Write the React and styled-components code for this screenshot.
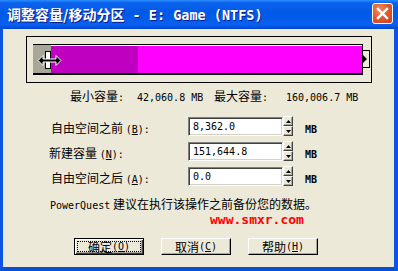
import React from 'react';
import styled, { createGlobalStyle } from 'styled-components';

const Global = createGlobalStyle`
  html, body { margin: 0; padding: 0; background: #fff; }
  body {
    font-family: "Noto Sans CJK SC", sans-serif;
    font-size: 12px;
    color: #000;
  }
  * { box-sizing: border-box; }
`;

const Window = styled.div`
  width: 398px;
  height: 271px;
  display: flex;
  flex-direction: column;
  overflow: hidden;
`;

const TitleBar = styled.div`
  height: 29px;
  flex: none;
  display: flex;
  align-items: center;
  padding: 0 5px 0 7px;
  background: linear-gradient(
    to bottom,
    #2a8cff 0%,
    #0a62ec 10%,
    #0058e6 45%,
    #0a60f0 85%,
    #0050dc 95%,
    #0040c8 100%
  );
`;

const TitleText = styled.div`
  flex: 1;
  color: #fff;
  font-weight: bold;
  font-size: 14px;
  line-height: 16px;
  margin-top: -1px;
  text-shadow: 1px 1px 0 #0a1a8a;
  white-space: nowrap;
`;

const TitleMono = styled.span`
  font-family: "DejaVu Sans Mono", monospace;
  font-size: 13.5px;
  font-weight: bold;
`;

const CloseButton = styled.div`
  width: 21px;
  height: 21px;
  margin-top: -3px;
  border: 1px solid #fff;
  border-radius: 3px;
  background: radial-gradient(circle at 35% 30%, #f08a5c 0%, #e0582c 50%, #c8401a 100%);
  display: flex;
  align-items: center;
  justify-content: center;
`;

const Body = styled.div`
  flex: 1;
  display: flex;
  flex-direction: column;
  background: #ece9d8;
  border-left: 3px solid #0b55e0;
  border-right: 4px solid #0b55e0;
  border-bottom: 4px solid #0a4ed4;
  padding-top: 7px;
`;

const SliderBox = styled.div`
  position: relative;
  margin-left: 23px;
  width: 346px;
  height: 47px;
  border: 1px solid #000;
  padding: 7px 0 0 6px;
  display: flex;
  align-items: flex-start;
`;

const Bar = styled.div`
  width: 330px;
  height: 31px;
  display: flex;
  border-top: 1px solid #000;
  border-bottom: 2px solid #000;
  border-right: 1px solid #000;
`;

const Segment = styled.div`
  flex: ${p => (p.$grow ? '1' : 'none')};
  width: ${p => (p.$grow ? 'auto' : `${p.$w}px`)};
  background: ${p => p.$color};
  box-shadow: ${p => (p.$shine ? 'inset 0 1px 0 #fff' : 'none')};
  display: flex;
  align-items: center;
  justify-content: flex-end;
`;

const Handle = styled.div`
  width: 6px;
  height: 18px;
  margin-top: 1px;
  border: 1px solid #000;
  background: #fff;
`;

const EndCap = styled.div`
  margin-top: 6px;
  width: 7px;
  height: 18px;
  border: 1px solid #000;
  border-left: none;
  display: flex;
  align-items: center;
`;

const Cursor = styled.svg`
  position: absolute;
  left: 10px;
  top: 18px;
`;

const StatsRow = styled.div`
  margin-top: 5px;
  height: 16px;
  line-height: 16px;
  padding-left: 67px;
  display: flex;
  white-space: nowrap;
`;

const StatCell = styled.div`
  width: ${p => p.$w}px;
  flex: none;
`;

const Mono = styled.span`
  font-family: "DejaVu Sans Mono", monospace;
  font-size: 10px;
`;

const Form = styled.div`
  margin-top: 13px;
  display: flex;
  flex-direction: column;
  gap: 6px;
`;

const FieldRow = styled.div`
  height: 19px;
  display: flex;
  align-items: center;
  padding-left: ${p => p.$indent}px;
`;

const FieldLabel = styled.div`
  width: ${p => 137 + (48 - p.$indent)}px;
  padding-top: 5px;
  line-height: 16px;
  white-space: nowrap;
`;

const Input = styled.div`
  width: 95px;
  height: 19px;
  background: #fff;
  border-top: 1px solid #808080;
  border-left: 1px solid #808080;
  border-bottom: 1px solid #fff;
  border-right: 1px solid #fff;
  box-shadow: inset 1px 1px 0 #404040, inset -1px -1px 0 #d4d0c8;
  padding: 0 4px;
  display: flex;
  align-items: center;
  font-family: "DejaVu Sans Mono", monospace;
  font-size: 10px;
`;

const Spinner = styled.div`
  width: 10px;
  height: 20px;
  display: flex;
  flex-direction: column;
  margin-top: -1px;
`;

const SpinButton = styled.div`
  flex: 1;
  background: #ece9d8;
  border-top: 1px solid #fff;
  border-left: 1px solid #fff;
  border-bottom: 1px solid #404040;
  border-right: 1px solid #404040;
  box-shadow: inset -1px -1px 0 #aca899;
  display: flex;
  align-items: center;
  justify-content: center;
`;

const Unit = styled.div`
  margin-left: 12px;
  padding-top: 5px;
  font-family: "DejaVu Sans Mono", monospace;
  font-size: 10px;
  font-weight: bold;
`;

const Notice = styled.div`
  margin-top: 11px;
  padding-left: 47px;
  line-height: 14px;
  white-space: nowrap;
`;

const Site = styled.div`
  margin-top: 0px;
  padding-left: 207px;
  height: 14px;
  line-height: 14px;
  color: #ff0000;
  font-family: "DejaVu Sans Mono", monospace;
  font-size: 13px;
  font-weight: bold;
`;

const ButtonRow = styled.div`
  margin-top: 11px;
  padding-left: 71px;
  display: flex;
  gap: 17px;
`;

const Button = styled.div`
  width: 70px;
  height: 17px;
  background: #ece9d8;
  border-top: 1px solid ${p => (p.$default ? '#000' : '#fff')};
  border-left: 1px solid ${p => (p.$default ? '#000' : '#fff')};
  border-bottom: 1px solid #000;
  border-right: 1px solid #000;
  box-shadow: ${p =>
    p.$default
      ? 'inset 1px 1px 0 #fff, inset -1px -1px 0 #404040, inset -2px -2px 0 #aca899'
      : 'inset -1px -1px 0 #aca899'};
  display: flex;
  align-items: center;
  justify-content: center;
  padding: 2px;
`;

const Focus = styled.div`
  width: 100%;
  height: 100%;
  display: flex;
  align-items: center;
  justify-content: center;
  outline: ${p => (p.$on ? '1px dotted #000' : 'none')};
  outline-offset: -1px;
  line-height: 12px;
  white-space: nowrap;
`;

const Key = ({ k }) => (
  <Mono>
    (<u>{k}</u>)
  </Mono>
);

const Up = () => (
  <svg width="5" height="3" viewBox="0 0 5 3">
    <polygon points="2.5,0 5,3 0,3" fill="#000" />
  </svg>
);
const Down = () => (
  <svg width="5" height="3" viewBox="0 0 5 3">
    <polygon points="0,0 5,0 2.5,3" fill="#000" />
  </svg>
);

const Field = ({ indent = 48, label, k, value }) => (
  <FieldRow $indent={indent}>
    <FieldLabel $indent={indent}>
      {label} <Key k={k} />
      <Mono>:</Mono>
    </FieldLabel>
    <Input>{value}</Input>
    <Spinner>
      <SpinButton>
        <Up />
      </SpinButton>
      <SpinButton>
        <Down />
      </SpinButton>
    </Spinner>
    <Unit>MB</Unit>
  </FieldRow>
);

export default function App() {
  return (
    <>
      <Global />
      <Window>
        <TitleBar>
          <TitleText>
            调整容量/移动分区<TitleMono> - E: Game (NTFS)</TitleMono>
          </TitleText>
          <CloseButton>
            <svg width="13" height="13" viewBox="0 0 13 13">
              <path d="M2 2 L11 11 M11 2 L2 11" stroke="#fff" strokeWidth="2.4" strokeLinecap="square" />
            </svg>
          </CloseButton>
        </TitleBar>
        <Body>
          <SliderBox>
            <Bar>
              <Segment $w={18} $color="#a8a797">
                <Handle />
              </Segment>
              <Segment $w={87} $color="#c000c0" $shine />
              <Segment $grow $color="#ff00ff" $shine />
            </Bar>
            <EndCap>
              <svg width="4" height="8" viewBox="0 0 4 8">
                <polygon points="0,0 4,4 0,8" fill="#000" />
              </svg>
            </EndCap>
            <Cursor width="25" height="11" viewBox="0 0 25 11">
              <path
                d="M1 5.5 L6 0.5 L6 4 L19 4 L19 0.5 L24 5.5 L19 10.5 L19 7 L6 7 L6 10.5 Z"
                fill="#000"
                stroke="#fff"
                strokeWidth="1"
              />
            </Cursor>
          </SliderBox>
          <StatsRow>
            <StatCell $w={67}>
              最小容量<Mono>:</Mono>
            </StatCell>
            <StatCell $w={77}>
              <Mono>42,060.8 MB</Mono>
            </StatCell>
            <StatCell $w={72}>
              最大容量<Mono>:</Mono>
            </StatCell>
            <StatCell $w={80}>
              <Mono>160,006.7 MB</Mono>
            </StatCell>
          </StatsRow>
          <Form>
            <Field label="自由空间之前" k="B" value="8,362.0" />
            <Field indent={46} label="新建容量" k="N" value="151,644.8" />
            <Field label="自由空间之后" k="A" value="0.0" />
          </Form>
          <Notice>
            <Mono>PowerQuest</Mono> 建议在执行该操作之前备份您的数据。
          </Notice>
          <Site>www.smxr.com</Site>
          <ButtonRow>
            <Button $default>
              <Focus $on>
                确定 <Key k="O" />
              </Focus>
            </Button>
            <Button>
              <Focus>
                取消 <Key k="C" />
              </Focus>
            </Button>
            <Button>
              <Focus>
                帮助 <Key k="H" />
              </Focus>
            </Button>
          </ButtonRow>
        </Body>
      </Window>
    </>
  );
}
